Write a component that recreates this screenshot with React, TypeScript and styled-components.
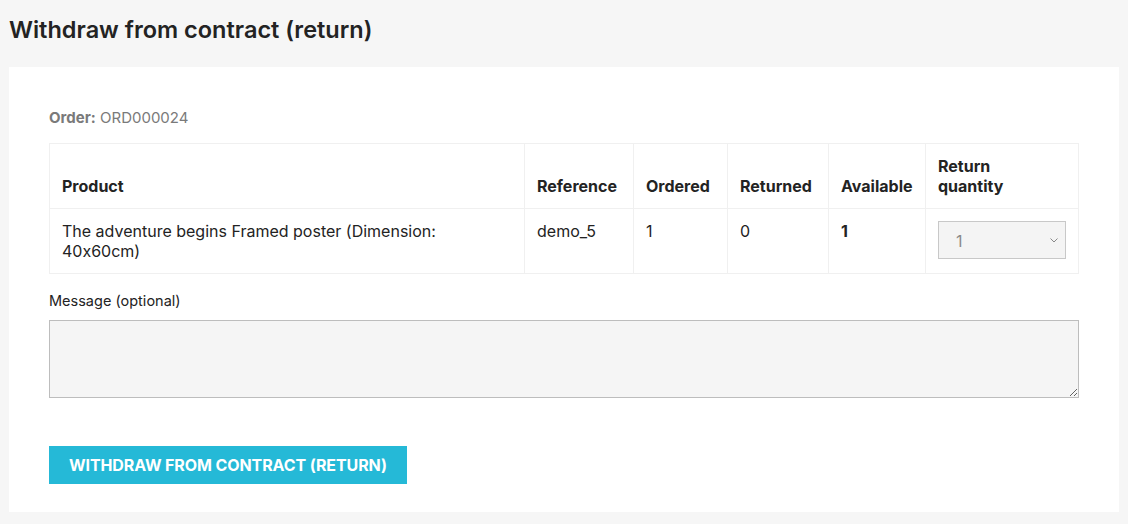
import type React from "react";
import styled, { createGlobalStyle } from "styled-components";

const GlobalStyle = createGlobalStyle`
  html, body {
    margin: 0;
    padding: 0;
    background: #f6f6f6;
  }
  body {
    font-family: Inter, "Noto Sans", "Liberation Sans", sans-serif;
    font-feature-settings: "calt" 0;
    color: #232323;
  }
`;

const Page = styled.div`
  padding: 16px 9px 12px;
`;

const Title = styled.h1`
  margin: 0 0 23px;
  font-size: 23.5px;
  line-height: 28px;
  font-weight: 600;
  color: #232323;
`;

const Card = styled.div`
  background: #fff;
  padding: 39px 40px 28px;
`;

const OrderLine = styled.div`
  font-size: 15px;
  line-height: 24px;
  color: #7a7a7a;
  margin-bottom: 13px;

  strong {
    font-weight: 700;
  }
`;

const Table = styled.table`
  width: 100%;
  border-collapse: collapse;
  font-size: 16px;
  line-height: 20px;
`;

const Th = styled.th<{ $width?: number }>`
  box-sizing: border-box;
  border: 1px solid #f0f0f0;
  padding: 12px 12px;
  text-align: left;
  vertical-align: bottom;
  font-weight: 700;
  width: ${({ $width }) => ($width ? `${$width}px` : "auto")};
`;

const Td = styled.td<{ $bold?: boolean }>`
  border: 1px solid #f0f0f0;
  padding: 12px 12px;
  vertical-align: top;
  font-weight: ${({ $bold }) => ($bold ? 700 : 400)};
`;

const Select = styled.select`
  appearance: none;
  display: block;
  width: 128px;
  height: 38px;
  padding: 2px 17px 0;
  background: #f4f4f4
    url("data:image/svg+xml;utf8,<svg xmlns='http://www.w3.org/2000/svg' width='8' height='5' viewBox='0 0 8 5'><path d='M0.5 0.5l3.5 3.5 3.5-3.5' fill='none' stroke='%23888' stroke-width='1'/></svg>")
    no-repeat right 7px center;
  border: 1px solid #c8c8c8;
  border-radius: 0;
  font-family: inherit;
  font-size: 16px;
  color: #8a8a8a;
  outline: none;
`;

const Label = styled.label`
  display: block;
  margin-top: 17px;
  font-size: 14.5px;
  line-height: 20px;
  margin-bottom: 9px;
`;

const TextArea = styled.textarea`
  display: block;
  box-sizing: border-box;
  width: 100%;
  height: 78px;
  background: #f5f5f5;
  border: 1px solid #bdbdbd;
  border-radius: 0;
  font-family: inherit;
  font-size: 14px;
  resize: vertical;
  outline: none;
`;

const SubmitButton = styled.button`
  margin-top: 48px;
  height: 38px;
  padding: 0 20px;
  background: #25b9d7;
  border: none;
  border-radius: 0;
  color: #fff;
  font-family: inherit;
  font-size: 16px;
  font-weight: 700;
  text-transform: uppercase;
  letter-spacing: -0.1px;
  cursor: pointer;
`;

const App: React.FC = () => {
  return (
    <Page>
      <GlobalStyle />
      <Title>Withdraw from contract (return)</Title>
      <Card>
        <OrderLine>
          <strong>Order:</strong> ORD000024
        </OrderLine>
        <Table>
          <thead>
            <tr>
              <Th>Product</Th>
              <Th $width={109}>Reference</Th>
              <Th $width={94}>Ordered</Th>
              <Th $width={101}>Returned</Th>
              <Th $width={97}>Available</Th>
              <Th $width={153}>
                Return
                <br />
                quantity
              </Th>
            </tr>
          </thead>
          <tbody>
            <tr>
              <Td>The adventure begins Framed poster (Dimension: 40x60cm)</Td>
              <Td>demo_5</Td>
              <Td>1</Td>
              <Td>0</Td>
              <Td $bold>1</Td>
              <Td>
                <Select defaultValue="1">
                  <option value="1">1</option>
                </Select>
              </Td>
            </tr>
          </tbody>
        </Table>
        <Label htmlFor="msg">Message (optional)</Label>
        <TextArea id="msg" />
        <SubmitButton>Withdraw from contract (return)</SubmitButton>
      </Card>
    </Page>
  );
};

export default App;
